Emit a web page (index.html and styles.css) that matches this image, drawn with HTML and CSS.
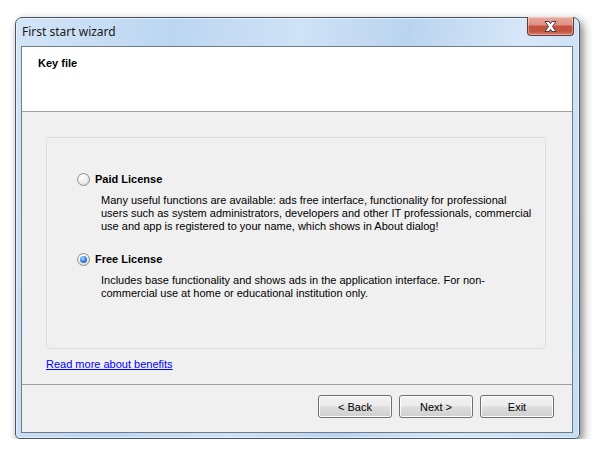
FILE: index.html
```html
<!DOCTYPE html>
<html lang="en">
<head>
    <meta charset="UTF-8">
    <title>First start wizard</title>
    <link rel="stylesheet" href="styles.css">
</head>
<body>
    <div class="window">
        <div class="titlebar">
            <span class="title">First start wizard</span>
            <button class="close" type="button" aria-label="Close">
                <svg width="17" height="11" viewBox="0 0 17 11">
                    <path d="M3 0.5h4l1.5 2.2 1.5-2.2h4l-3.5 5 3.5 5h-4l-1.5-2.2-1.5 2.2h-4l3.5-5z" fill="#fff" stroke="#4a3a3a" stroke-width="1" stroke-linejoin="round"/>
                </svg>
            </button>
        </div>
        <div class="client">
            <div class="header">
                <h1>Key file</h1>
            </div>
            <div class="content">
                <div class="groupbox">
                    <label class="option">
                        <span class="radio"></span>
                        <span class="option-name">Paid License</span>
                    </label>
                    <p class="desc">Many useful functions are available: ads free interface, functionality for professional users such as system administrators, developers and other IT professionals, commercial use and app is registered to your name, which shows in About dialog!</p>

                    <label class="option option-free">
                        <span class="radio checked"></span>
                        <span class="option-name">Free License</span>
                    </label>
                    <p class="desc">Includes base functionality and shows ads in the application interface. For non-commercial use at home or educational institution only.</p>
                </div>
                <a class="more" href="#">Read more about benefits</a>
            </div>
            <div class="footer">
                <button class="btn" type="button">&lt; Back</button>
                <button class="btn" type="button">Next &gt;</button>
                <button class="btn" type="button">Exit</button>
            </div>
        </div>
    </div>
</body>
</html>
```

FILE: styles.css
```css
body {
    margin: 0;
    padding: 17px 0 0 15px;
    background-color: #ffffff;
    font-family: "Liberation Sans", Arial, sans-serif;
    font-size: 11px;
    color: #000000;
}

.window {
    width: 565px;
    box-sizing: border-box;
    border: 1px solid #4a5563;
    border-radius: 7px 7px 5px 5px;
    padding: 0 6px 5px 5px;
    background: linear-gradient(100deg, #d3e5f7 0%, #bcd6f1 25%, #cfe2f6 45%, #bad4ef 62%, #d6e7f8 80%, #c5dcf3 100%);
    box-shadow: 3px 4px 10px rgba(0, 0, 0, 0.5), inset 0 0 0 1px rgba(255, 255, 255, 0.5);
}

.titlebar {
    height: 28px;
    display: flex;
    justify-content: space-between;
    align-items: flex-start;
}

.title {
    font-family: "Noto Sans", "Open Sans", sans-serif;
    font-size: 12px;
    line-height: 28px;
    margin-left: 1px;
    color: #1a1a1a;
}

.close {
    width: 47px;
    height: 19px;
    margin: -1px -1px 0 0;
    padding: 0;
    border: 1px solid #6b3a34;
    border-top: none;
    border-radius: 0 0 4px 4px;
    background: linear-gradient(#e9a99e 0%, #dc8f82 45%, #c6503e 50%, #c35744 80%, #d8806f 100%);
    box-shadow: inset 0 0 0 1px rgba(255, 255, 255, 0.35);
    display: flex;
    align-items: center;
    justify-content: center;
}

.client {
    border: 1px solid #6f7d8b;
    background-color: #f0f0f0;
}

.header {
    height: 65px;
    background-color: #ffffff;
    border-bottom: 1px solid #a0a0a0;
    padding: 10px 16px 0;
    box-sizing: border-box;
}

h1 {
    margin: 0;
    font-size: 11px;
    line-height: 13px;
    font-weight: bold;
}

.content {
    height: 273px;
    padding: 25px 26px 0 24px;
    box-sizing: border-box;
    border-bottom: 1px solid #a0a0a0;
}

.groupbox {
    height: 212px;
    box-sizing: border-box;
    border: 1px solid #d5dfe5;
    border-radius: 3px;
    padding: 35px 10px 0 30px;
}

.option {
    display: flex;
    align-items: center;
    gap: 5px;
    height: 13px;
}

.option-free {
    margin-top: 20px;
}

.radio {
    width: 13px;
    height: 13px;
    box-sizing: border-box;
    border-radius: 50%;
    border: 1px solid #8e8f8f;
    background: radial-gradient(circle at 40% 35%, #ffffff 0%, #f4f4f4 35%, #cfcfcf 100%);
    display: flex;
    align-items: center;
    justify-content: center;
}

.radio.checked::after {
    content: "";
    width: 7px;
    height: 7px;
    border-radius: 50%;
    background: radial-gradient(circle at 40% 35%, #b9e0ff 0%, #3b8be0 45%, #0b4aa6 100%);
}

.option-name {
    font-weight: bold;
    line-height: 13px;
}

.desc {
    margin: 8px 0 0 24px;
    width: 434px;
    line-height: 13px;
}

.more {
    display: inline-block;
    margin-top: 9px;
    line-height: 13px;
    color: #0000ff;
}

.footer {
    height: 47px;
    display: flex;
    justify-content: flex-end;
    gap: 7px;
    padding: 10px 18px 0 0;
    box-sizing: border-box;
    align-items: flex-start;
}

.btn {
    width: 74px;
    height: 23px;
    padding: 0;
    border: 1px solid #707070;
    border-radius: 3px;
    background: linear-gradient(#f2f2f2 0%, #ebebeb 48%, #dddddd 52%, #cfcfcf 100%);
    box-shadow: inset 0 0 0 1px #fcfcfc;
    font-family: "Liberation Sans", Arial, sans-serif;
    font-size: 11px;
    color: #000000;
}
```
